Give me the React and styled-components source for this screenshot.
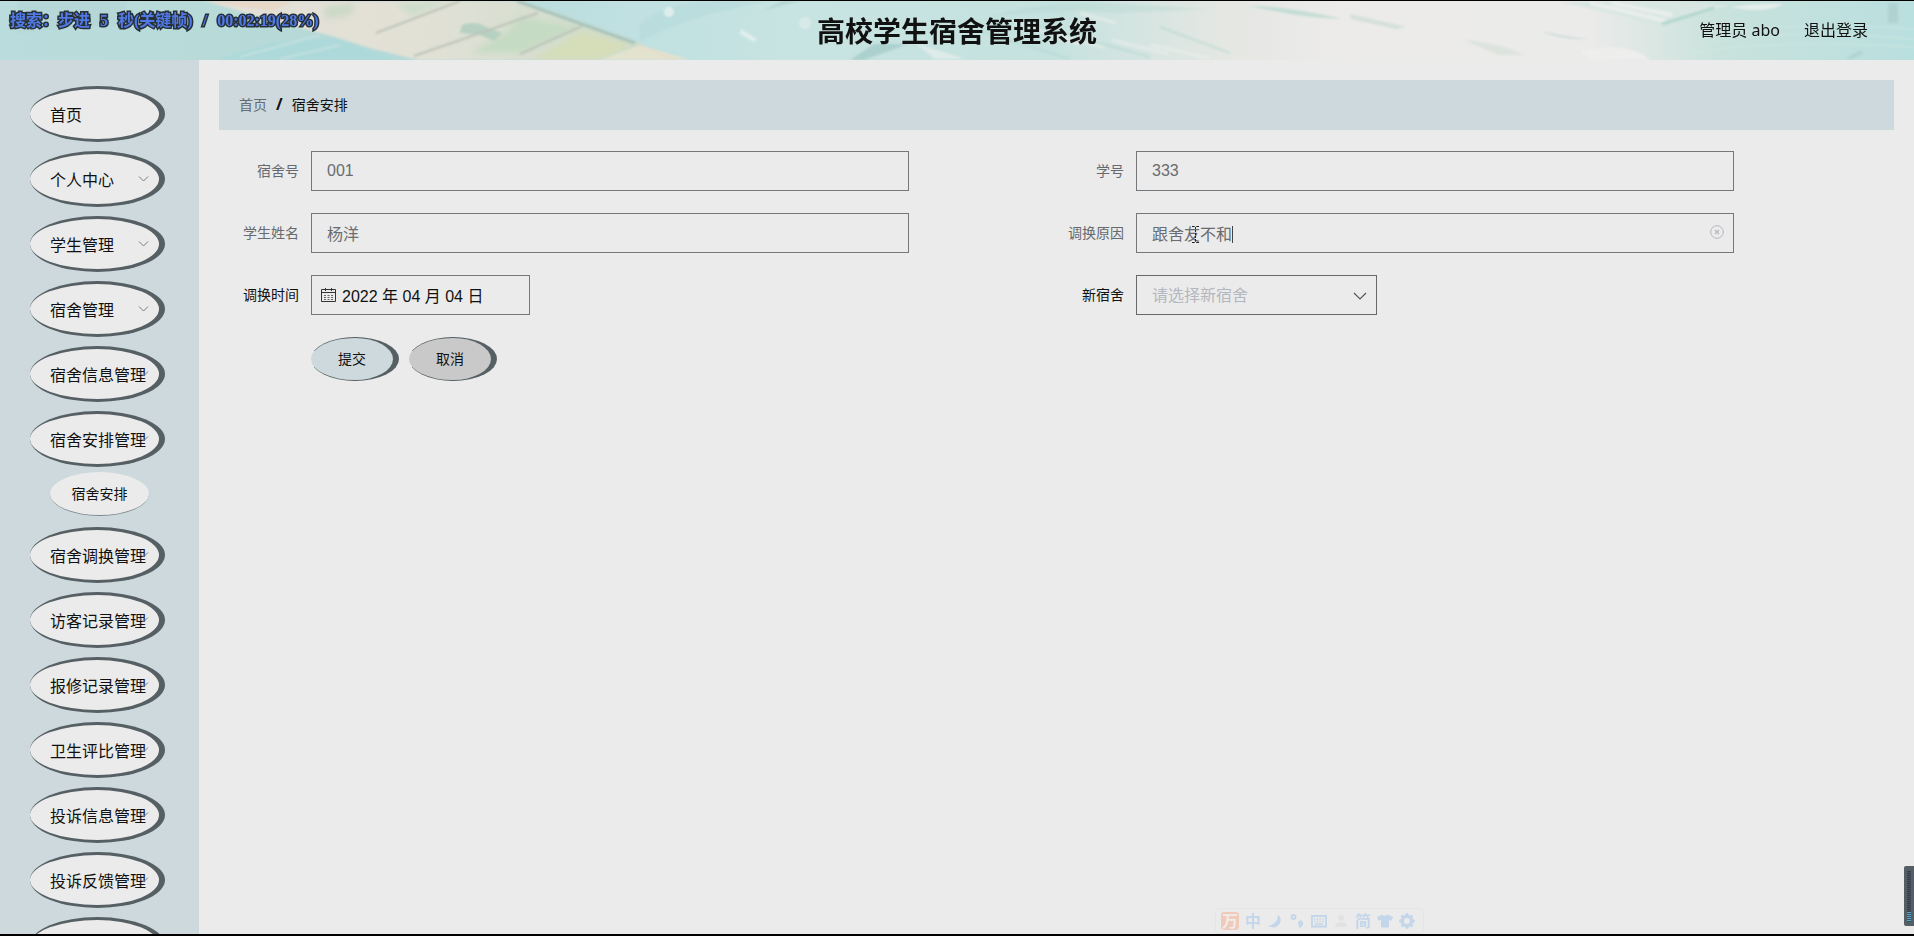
import React, { useState } from 'react';
import styled, { createGlobalStyle } from 'styled-components';
import { FaTshirt } from 'react-icons/fa';
import { BsGearFill, BsPersonFill } from 'react-icons/bs';

const GlobalStyle = createGlobalStyle`
  * {
    box-sizing: border-box;
  }
  body {
    margin: 0;
    background: #ebebeb;
    color: #111;
    font-family: "Noto Sans", "Noto Sans CJK SC", sans-serif;
    font-size: 14px;
  }
  button, input, select {
    font-family: "Liberation Sans", "Noto Sans CJK SC", sans-serif;
    color: inherit;
    outline: none;
  }
  ul {
    list-style: none;
    margin: 0;
    padding: 0;
  }
`;

const Page = styled.div`
  height: 100vh;
  display: flex;
  flex-direction: column;
  overflow: hidden;
  border-top: 1px solid #000;
  border-bottom: 2px solid #000;
`;

const Header = styled.header`
  position: relative;
  flex: none;
  height: 59px;
  padding: 0 46px;
  display: grid;
  grid-template-columns: 1fr auto 1fr;
  align-items: center;
`;

const Artwork = styled.svg`
  position: absolute;
  top: 0;
  left: 0;
  width: 100%;
  height: 100%;
`;

const Title = styled.h1`
  position: relative;
  grid-column: 2;
  margin: 0;
  font-size: 28px;
  line-height: 40px;
  font-weight: bold;
`;

const UserArea = styled.div`
  position: relative;
  display: flex;
  justify-content: flex-end;
  gap: 24px;
  padding-bottom: 2px;
  font-size: 16px;
  line-height: 24px;
  a {
    color: inherit;
    text-decoration: none;
  }
`;

const Content = styled.div`
  flex: 1;
  min-height: 0;
  display: flex;
`;

const Sidebar = styled.nav`
  width: 199px;
  flex: none;
  padding: 26px 34px 0 30px;
  background: #cdd9dd;
  overflow: hidden;
`;

const MenuItem = styled.li`
  margin-bottom: 9px;
`;

const MenuButton = styled.button`
  position: relative;
  display: block;
  width: 100%;
  height: 56px;
  padding: 0 0 0 20px;
  border: solid #566064;
  border-width: 3px 6px 3px 0;
  border-radius: 50%;
  background: #ebebeb;
  font-size: 16px;
  text-align: left;
  white-space: nowrap;
  cursor: pointer;
`;

const MenuArrow = styled.svg`
  position: absolute;
  top: 21px;
  right: 10px;
  width: 11px;
  height: 8px;
`;

const SubMenu = styled.ul`
  padding: 5px 16px 2px 20px;
`;

const SubButton = styled.button`
  width: 100%;
  height: 44px;
  padding: 0 0 2px;
  border: solid #7c868a;
  border-width: 0 0 1px;
  border-radius: 50%;
  background: #ebebeb;
  font-size: 14px;
  cursor: pointer;
`;

const Main = styled.main`
  flex: 1;
  min-width: 0;
  padding: 20px;
`;

const Breadcrumb = styled.nav`
  height: 50px;
  padding: 0 20px 2px;
  display: flex;
  align-items: center;
  gap: 9px;
  background: #cdd9dd;
  a {
    color: #666c70;
    text-decoration: none;
  }
  b {
    font-size: 16px;
  }
`;

const Form = styled.form`
  display: grid;
  grid-template-columns: 1fr 1fr;
  row-gap: 22px;
  padding: 21px 25px 0 0;
`;

const FormItem = styled.div`
  display: grid;
  grid-template-columns: 92px 1fr;
  align-items: center;
  padding-right: 135px;
`;

const Label = styled.label`
  padding: 0 12px 2px 0;
  text-align: right;
  color: ${(props) => (props.$muted ? '#666a6e' : '#111')};
`;

const Control = styled.div`
  position: relative;
  width: ${(props) => props.$width || '100%'};
`;

const TextInput = styled.input`
  display: block;
  width: 100%;
  height: 40px;
  padding: 0 15px 0 ${(props) => (props.$icon ? '30px' : '15px')};
  border: 1px solid #75787a;
  border-radius: 0;
  background: transparent;
  font-size: 16px;
  color: ${(props) => (props.$icon ? '#111' : '#696c70')};
`;

const SelectBox = styled.select`
  display: block;
  width: 100%;
  height: 40px;
  padding: 0 30px 0 15px;
  appearance: none;
  border: 1px solid #66696b;
  border-radius: 0;
  background: transparent;
  font-size: 16px;
  color: #b4b7bf;
`;

const FieldIcon = styled.svg`
  position: absolute;
  top: ${(props) => props.$top};
  left: ${(props) => props.$left};
  right: ${(props) => props.$right};
  pointer-events: none;
`;

const Caret = styled.span`
  position: absolute;
  top: 13px;
  left: 96px;
  width: 1px;
  height: 17px;
  background: #444;
`;

const Actions = styled.div`
  display: flex;
  gap: 10px;
  padding-left: 92px;
`;

const ActionButton = styled.button`
  width: 88px;
  height: 44px;
  padding: 0 0 2px;
  border: solid #566064;
  border-width: 1px 6px 1px 0;
  border-radius: 50%;
  background: ${(props) => (props.$primary ? '#cdd9dd' : '#c9c9c9')};
  font-size: 14px;
  cursor: pointer;
`;

const SeekInfo = styled.div`
  position: fixed;
  top: 10px;
  left: 10px;
  display: flex;
  gap: 10px;
  font-family: "Liberation Serif", "Noto Sans CJK SC", serif;
  font-size: 16px;
  line-height: 22px;
  font-weight: bold;
  color: #5079e6;
  -webkit-text-stroke: 3px #263036;
  paint-order: stroke fill;
  white-space: nowrap;
`;

const ImeBar = styled.div`
  position: fixed;
  right: 490px;
  bottom: 2px;
  height: 26px;
  padding: 0 8px 0 5px;
  display: flex;
  align-items: center;
  gap: 6px;
  border: 1px solid #e5e5e5;
  border-radius: 4px;
  color: #c4d6e9;
  font-size: 16px;
  line-height: 18px;
  font-weight: bold;
  svg {
    width: 16px;
    height: 16px;
  }
`;

const ImeLogo = styled.span`
  width: 18px;
  height: 18px;
  border-radius: 3px;
  background: #efcbbb;
  color: #f3ece8;
  text-align: center;
`;

const VolumeBar = styled.div`
  position: fixed;
  right: 0;
  bottom: 10px;
  width: 10px;
  height: 60px;
  padding: 5px 3px 4px;
  border-radius: 2px 0 0 2px;
  background: #555d65;
`;

const VolumeTrack = styled.div`
  height: 100%;
  display: flex;
  align-items: flex-end;
  background: repeating-linear-gradient(#34404b 0 1px, #46535f 1px 2px);
`;

const VolumeLevel = styled.div`
  width: 100%;
  height: 20%;
  background: repeating-linear-gradient(#5ba7c6 0 1px, #36505f 1px 2px);
`;

const menus = [
  { name: '首页', leaf: true },
  { name: '个人中心' },
  { name: '学生管理' },
  { name: '宿舍管理' },
  { name: '宿舍信息管理' },
  { name: '宿舍安排管理', children: ['宿舍安排'] },
  { name: '宿舍调换管理' },
  { name: '访客记录管理' },
  { name: '报修记录管理' },
  { name: '卫生评比管理' },
  { name: '投诉信息管理' },
  { name: '投诉反馈管理' },
  { name: '' },
];

function HeaderArtwork() {
  return (
    <Artwork viewBox="0 0 1914 59" preserveAspectRatio="none" aria-hidden="true">
      <defs>
        <linearGradient id="sky" x1="0" x2="1">
          <stop offset="0" stopColor="#bbdcdc" />
          <stop offset="0.2" stopColor="#b5d9d7" />
          <stop offset="0.33" stopColor="#c0e0e1" />
          <stop offset="0.42" stopColor="#c8e4e2" />
          <stop offset="0.55" stopColor="#c5e2df" />
          <stop offset="0.64" stopColor="#e5e7e3" />
          <stop offset="0.7" stopColor="#ecebea" />
          <stop offset="0.83" stopColor="#ebebea" />
          <stop offset="0.9" stopColor="#c9e2dc" />
          <stop offset="1" stopColor="#b9dfdf" />
        </linearGradient>
        <linearGradient id="roof" x1="0" x2="1">
          <stop offset="0" stopColor="#e4e0d8" />
          <stop offset="0.5" stopColor="#e2e1d6" />
          <stop offset="1" stopColor="#ccdccb" />
        </linearGradient>
        <filter id="soft">
          <feGaussianBlur stdDeviation="1" />
        </filter>
        <filter id="softer">
          <feGaussianBlur stdDeviation="3" />
        </filter>
      </defs>
      <rect width="1914" height="59" fill="url(#sky)" />
      <g filter="url(#soft)">
        <path d="M18 0h110l-12 24-100 8z" fill="#a9cdd1" opacity=".3" />
        <path d="M215 59l60-18 60-4 60 22z" fill="#add9da" />
        <path d="M240 56l80-22M280 58l60-14" stroke="#c4e0df" strokeWidth="2" />
        <path d="M205 0h315l125 44-48 15H418l-48-12-38-12-58-15z" fill="url(#roof)" />
        <path d="M205 0h88l-20 10z" fill="#e7d8c8" />
      </g>
      <g filter="url(#softer)">
        <path d="M325 6l30-4-4 12-26 4z" fill="#cbd9c5" />
        <path d="M395 3l57-3-40 14z" fill="#cbdcc9" />
        <path d="M520 16l60 10-60 26h-50l36-20z" fill="#c6dbc3" />
        <path d="M582 30l50 14-30 15h-70z" fill="#d5ddb9" />
      </g>
      <g filter="url(#soft)">
        <path d="M462 24q12-4 20 0t20 8l-8 8-14-6-20-2z" fill="#b6d0c1" />
        <path d="M460 0l-84 32M538 12l-124 43M582 25l-62 28" stroke="#bcc4b8" strokeWidth="2" fill="none" />
        <path d="M517 0l118 42" stroke="#a7c3bb" strokeWidth="3" />
        <path d="M640 44l50 15h-90z" fill="#e3e2cf" />
        <path d="M640 46q20 6 36 13" stroke="#e6dccb" strokeWidth="2" fill="none" />
        <path d="M640 24q20-20 70-24h60q-80 14-130 40z" fill="#afd8d8" opacity=".4" />
        <circle cx="669" cy="11" r="5" fill="#dfeeec" />
        <circle cx="805" cy="22" r="6" fill="#d8eae8" />
        <path d="M741 28l16 10-3 3-14-8z" fill="#e0efed" />
        <path d="M762 10q18-6 40-10h-20z" fill="#b3d5d1" />
        <path d="M850 59l24-16h34l-44 16z" fill="#acd0ce" />
        <path d="M915 42l50 16h-30z" fill="#deebe8" />
        <path d="M985 18q50-18 120-16l100 6-90 4q-70-6-130 6z" fill="#b3d8d0" opacity=".4" />
        <g opacity=".55">
          <path d="M1080 12l36 10M1060 34l44 12M1112 39l56 14M1015 21l64 22M1150 44l60 13" stroke="#e9eeea" strokeWidth="4" />
          <path d="M1040 26l110 30M980 30l90 28M1160 26l70 26" stroke="#afd7cf" strokeWidth="2" />
        </g>
        <path d="M1250 5q35 0 92 13-40-1-92-13z" fill="#c3ddd5" />
        <path d="M1350 13l56 13-10 2-45-10z" fill="#d4e0da" />
        <path d="M1464 39q40 4 60 15h-26z" fill="#dce3dd" />
        <path d="M1540 30q24 6 48 8-24 1-48-8z" fill="#bfd7d1" />
        <path d="M1560 1q84-3 170 3l-70 21q-50-14-100-24z" fill="#d8e6e2" />
        <path d="M1590 2l76 18M1612 2l60 12" stroke="#e9eeec" strokeWidth="4" />
        <path d="M1662 23l52-16" stroke="#b0d7ce" strokeWidth="3" />
        <path d="M1730 6q30-4 54-3-20 10-54 3z" fill="#e6eeeb" />
        <path d="M1580 50q50-10 70 9h-60z" fill="#eeeeec" />
        <path d="M1700 44q70-18 214-6M1690 52q90-14 224-6M1720 32q90-12 194-4" stroke="#cde8e3" strokeWidth="2" fill="none" opacity=".6" />
        <path d="M1888 2h10v20h-10zM1845 58l14-8 5 2-12 6z" fill="#b0d3d1" />
      </g>
    </Artwork>
  );
}

function Menu() {
  return (
    <Sidebar>
      <ul>
        {menus.map((item) => (
          <MenuItem key={item.name}>
            <MenuButton type="button">
              {!item.leaf && (
                <MenuArrow viewBox="0 0 11 8" fill="none" stroke="#777d80">
                  <path d="M1 1.500l4.500 4.500L10 1.500" />
                </MenuArrow>
              )}
              {item.name}
            </MenuButton>
            {item.children && (
              <SubMenu>
                {item.children.map((child) => (
                  <li key={child}>
                    <SubButton type="button">{child}</SubButton>
                  </li>
                ))}
              </SubMenu>
            )}
          </MenuItem>
        ))}
      </ul>
    </Sidebar>
  );
}

function ExchangeForm() {
  const [reason, setReason] = useState('跟舍友不和');
  return (
    <Form onSubmit={(e) => e.preventDefault()}>
      <FormItem>
        <Label htmlFor="room" $muted>宿舍号</Label>
        <Control><TextInput id="room" defaultValue="001" readOnly /></Control>
      </FormItem>
      <FormItem>
        <Label htmlFor="studentNo" $muted>学号</Label>
        <Control><TextInput id="studentNo" defaultValue="333" readOnly /></Control>
      </FormItem>
      <FormItem>
        <Label htmlFor="studentName" $muted>学生姓名</Label>
        <Control><TextInput id="studentName" defaultValue="杨洋" readOnly /></Control>
      </FormItem>
      <FormItem>
        <Label htmlFor="reason" $muted>调换原因</Label>
        <Control>
          <TextInput id="reason" value={reason} onChange={(e) => setReason(e.target.value)} />
          <Caret />
          {/* text pointer */}
          <FieldIcon $top="13px" $left="55px" width="9" height="17" viewBox="0 0 9 17" fill="none" stroke="#222">
            <path d="M1 .5h2.500l1 1 1-1H8M1 16.500h2.500l1-1 1 1H8" />
            <path d="M4.500 1v15" strokeDasharray="2 1" />
          </FieldIcon>
          <FieldIcon $top="12px" $right="10px" width="14" height="14" viewBox="0 0 14 14" fill="none" stroke="#b4b7bf">
            <circle cx="7" cy="7" r="6.300" />
            <path d="M5 5l4 4M9 5l-4 4" strokeWidth="1.300" />
          </FieldIcon>
        </Control>
      </FormItem>
      <FormItem>
        <Label htmlFor="date">调换时间</Label>
        <Control $width="219px">
          <TextInput id="date" defaultValue="2022 年 04 月 04 日" $icon />
          <FieldIcon $top="13px" $left="10px" width="15" height="14" viewBox="0 0 15 14" fill="none" stroke="#333">
            <path d="M.5 1.500h14v12H.5zM.5 4.500h14M4.500 0v3M10.500 0v3" />
            <path d="M3 7.500h9M3 9.500h9M3 11.500h9" stroke="#666" strokeDasharray="2 1.500" />
          </FieldIcon>
        </Control>
      </FormItem>
      <FormItem>
        <Label htmlFor="newRoom">新宿舍</Label>
        <Control $width="241px">
          <SelectBox id="newRoom" defaultValue="">
            <option value="">请选择新宿舍</option>
          </SelectBox>
          <FieldIcon $top="17px" $right="10px" width="14" height="9" viewBox="0 0 14 9" fill="none" stroke="#55585a" strokeWidth="1.200">
            <path d="M1 1l6 6 6-6" />
          </FieldIcon>
        </Control>
      </FormItem>
      <Actions>
        <ActionButton type="submit" $primary>提交</ActionButton>
        <ActionButton type="button">取消</ActionButton>
      </Actions>
    </Form>
  );
}

export default function App() {
  return (
    <>
      <GlobalStyle />
      <Page>
        <Header>
          <HeaderArtwork />
          <Title>高校学生宿舍管理系统</Title>
          <UserArea>
            <span>管理员 abo</span>
            <a href="#logout">退出登录</a>
          </UserArea>
        </Header>
        <Content>
          <Menu />
          <Main>
            <Breadcrumb>
              <a href="#home">首页</a>
              <b>/</b>
              <span>宿舍安排</span>
            </Breadcrumb>
            <ExchangeForm />
          </Main>
        </Content>
      </Page>
      <SeekInfo>
        <span>搜索：步进</span>
        <span>5</span>
        <span>秒(关键帧)</span>
        <span>/</span>
        <span>00:02:19(28%)</span>
      </SeekInfo>
      <ImeBar>
        <ImeLogo>万</ImeLogo>
        <span>中</span>
        <svg viewBox="0 0 16 16" fill="currentColor">
          <path d="M11 1.500q5 5 1 10t-11 1.500q10-2 10-11.500z" />
        </svg>
        <svg viewBox="0 0 16 16" fill="none" stroke="currentColor" strokeWidth="2">
          <circle cx="4.500" cy="4" r="2" />
          <circle cx="11.500" cy="10" r="1.500" />
          <path d="M13 10q0 3-3 4" />
        </svg>
        <svg viewBox="0 0 16 16" fill="none" stroke="currentColor">
          <path d="M1 3h14v10.500H1z" strokeWidth="1.800" />
          <path d="M3 6h10M3 8.500h10" strokeWidth="1.500" strokeDasharray="1.500 1.200" />
          <path d="M4 11h8" strokeWidth="1.500" />
        </svg>
        <BsPersonFill color="#e2e2e2" />
        <span>简</span>
        <FaTshirt />
        <BsGearFill />
      </ImeBar>
      <VolumeBar>
        <VolumeTrack>
          <VolumeLevel />
        </VolumeTrack>
      </VolumeBar>
    </>
  );
}
